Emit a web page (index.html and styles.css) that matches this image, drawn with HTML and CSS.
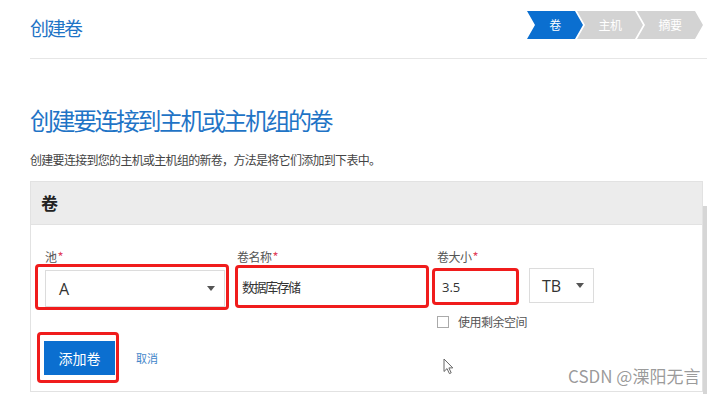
FILE: index.html
```html
<!DOCTYPE html>
<html lang="zh-CN">
<head>
    <meta charset="UTF-8">
    <meta name="viewport" content="width=device-width, initial-scale=1.0">
    <title>创建卷</title>
    <link rel="stylesheet" href="styles.css">
</head>
<body>
    <div class="page">
        <header class="top">
            <div class="crumb">创建卷</div>
            <ol class="steps">
                <li class="step active">卷</li>
                <li class="step">主机</li>
                <li class="step">摘要</li>
            </ol>
        </header>

        <h1 class="heading">创建要连接到主机或主机组的卷</h1>
        <p class="lead">创建要连接到您的主机或主机组的新卷，方法是将它们添加到下表中。</p>

        <section class="panel">
            <h2 class="panel-head">卷</h2>
            <div class="panel-body">
                <div class="form-row">
                    <div class="field field-pool">
                        <label class="label">池<span class="req">*</span></label>
                        <div class="mark mark-pool">
                            <div class="select"><span>A</span><i class="caret"></i></div>
                        </div>
                    </div>
                    <div class="field field-name">
                        <label class="label">卷名称<span class="req">*</span></label>
                        <div class="mark mark-name">
                            <div class="input input-name">数据库存储</div>
                        </div>
                    </div>
                    <div class="field field-size">
                        <label class="label">卷大小<span class="req">*</span></label>
                        <div class="mark mark-size">
                            <div class="input input-size">3.5</div>
                        </div>
                        <div class="check"><span class="box"></span>使用剩余空间</div>
                    </div>
                    <div class="unit">
                        <div class="select select-unit"><span>TB</span><i class="caret"></i></div>
                    </div>
                </div>
                <div class="actions">
                    <div class="mark mark-btn"><button class="btn">添加卷</button></div>
                    <a class="cancel">取消</a>
                </div>
            </div>
        </section>

        <!-- decorations over the page -->
        <div class="scrollbar"></div>
        <svg class="cursor" width="11" height="17" viewBox="0 0 11 17">
            <path d="M1 1 L1 13.5 L4 10.6 L6.4 15.6 L8.2 14.8 L5.9 9.9 L9.8 9.9 Z" fill="#fff" stroke="#666" stroke-width="1" stroke-linejoin="round"/>
        </svg>
        <div class="watermark">CSDN @溧阳无言</div>
    </div>
</body>
</html>
```

FILE: styles.css
```css
body {
    margin: 0;
    font-family: "Noto Sans CJK SC", sans-serif;
    color: #333;
    background: #fff;
}
.page {
    position: relative;
    width: 677px;
    height: 394px;
    padding-left: 30px;
    overflow: hidden;
}
.top {
    display: flex;
    justify-content: space-between;
    align-items: flex-start;
    height: 28px;
    padding: 11px 4px 19px 0;
    border-bottom: 1px solid #e6e6e6;
}
.crumb {
    margin-top: 3px;
    font-size: 19px;
    line-height: 28px;
    color: #1f74c6;
    letter-spacing: -2px;
}
.steps {
    display: flex;
    list-style: none;
    margin: 0;
    padding: 0;
}
.step {
    width: 66px;
    height: 28px;
    margin-left: -6px;
    line-height: 28px;
    text-align: center;
    font-size: 12px;
    letter-spacing: -0.5px;
    color: #fff;
    background: #d3d3d3;
    clip-path: polygon(0 0, calc(100% - 8px) 0, 100% 50%, calc(100% - 8px) 100%, 0 100%, 8px 50%);
}
.step.active {
    width: 56px;
    margin-left: 0;
    background: #0b6fd0;
}
.heading {
    margin: 46px 0 0;
    font-size: 24px;
    line-height: 30px;
    font-weight: normal;
    color: #1f74c6;
    letter-spacing: -2.5px;
}
.lead {
    margin: 17px 0 0;
    font-size: 12px;
    line-height: 16px;
    color: #444;
    letter-spacing: -0.7px;
}
.panel {
    margin: 13px 4px 0 0;
    border: 1px solid #e2e2e2;
}
.panel-head {
    margin: 0;
    height: 42px;
    line-height: 42px;
    padding-left: 10px;
    font-size: 17px;
    font-weight: bold;
    color: #222;
    background: #ececec;
    border-bottom: 1px solid #e2e2e2;
}
.panel-body {
    padding: 24px 0 8px 4px;
}
.form-row {
    display: flex;
    align-items: flex-start;
}
.field-pool {
    width: 194px;
}
.field-name {
    width: 194px;
    margin-left: 6px;
}
.field-size {
    width: 87px;
    margin-left: 3px;
}
.unit {
    margin: 19px 0 0 10px;
}
.label {
    display: block;
    font-size: 12px;
    line-height: 15px;
    color: #555;
    letter-spacing: -0.5px;
}
.field-pool .label {
    padding-left: 10px;
}
.field-name .label {
    padding-left: 2px;
}
.field-size .label {
    padding-left: 5px;
}
.req {
    margin-left: 1px;
    font-size: 13px;
    line-height: 10px;
    color: #e2445c;
}
.mark {
    border: 3px solid #f01c1c;
    border-radius: 4px;
}
.mark-pool {
    padding: 3px 1px 0 7px;
}
.mark-name {
    margin-top: 1px;
}
.mark-size {
    margin-top: 4px;
}
.select {
    display: flex;
    align-items: center;
    justify-content: space-between;
    box-sizing: border-box;
    height: 37px;
    padding: 0 9px 0 13px;
    border: 1px solid #dcdcdc;
    font-family: "Open Sans", "Noto Sans CJK SC", sans-serif;
    font-size: 16px;
    color: #333;
}
.select-unit {
    width: 65px;
    height: 35px;
    padding-left: 12px;
}
.caret {
    width: 0;
    height: 0;
    border-left: 4.5px solid transparent;
    border-right: 4.5px solid transparent;
    border-top: 5px solid #555;
}
.input {
    display: flex;
    align-items: center;
    box-sizing: border-box;
    font-size: 13px;
    color: #333;
}
.input-name {
    height: 37px;
    padding-left: 4px;
    letter-spacing: -1.5px;
}
.input-size {
    height: 31px;
    padding-left: 7px;
    font-family: "Open Sans", sans-serif;
}
.check {
    display: flex;
    align-items: center;
    margin-top: 10px;
    padding-left: 5px;
    height: 13px;
    font-size: 12px;
    color: #555;
    letter-spacing: -0.5px;
    white-space: nowrap;
}
.box {
    flex: none;
    width: 10px;
    height: 10px;
    margin-right: 9px;
    border: 1px solid #aaa;
}
.actions {
    display: flex;
    align-items: center;
    margin: 4px 0 0 2px;
}
.mark-btn {
    padding: 6px 1px 5px 4px;
}
.btn {
    display: block;
    width: 71px;
    height: 34px;
    padding: 0;
    border: none;
    background: #0b6fd0;
    color: #fff;
    font-family: inherit;
    font-size: 14px;
}
.cancel {
    margin-left: 17px;
    font-size: 11px;
    color: #3f85c9;
}
.scrollbar {
    position: absolute;
    left: 703px;
    top: 206px;
    width: 4px;
    height: 188px;
    background: #d6d6d6;
}
.cursor {
    position: absolute;
    left: 443px;
    top: 358px;
}
.watermark {
    position: absolute;
    left: 568px;
    top: 363px;
    font-size: 17px;
    color: rgba(110, 110, 110, 0.7);
}
```
